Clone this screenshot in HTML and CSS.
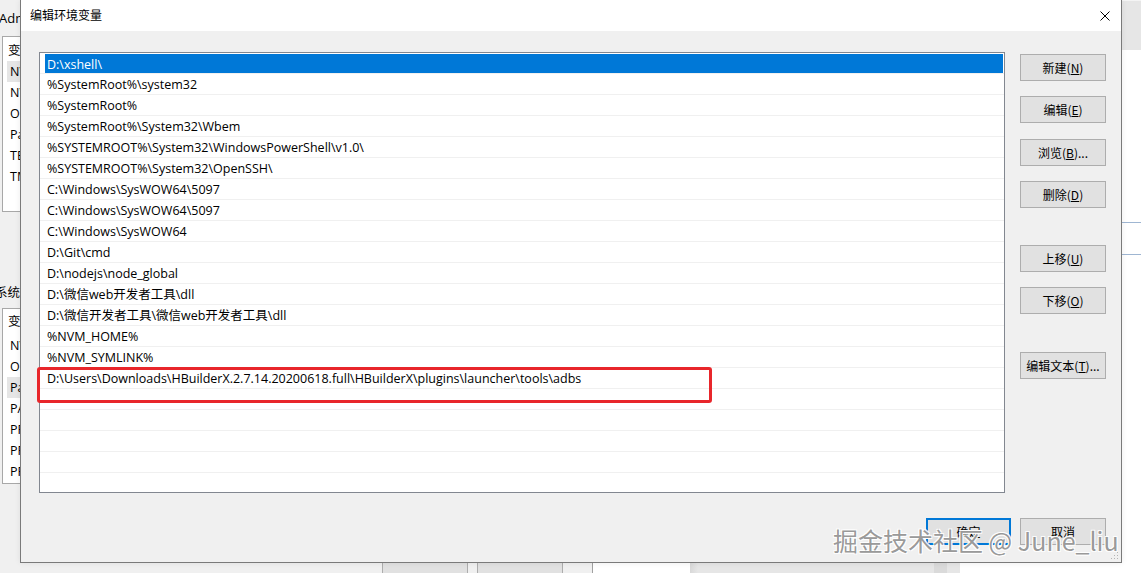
FILE: index.html
```html
<!DOCTYPE html>
<html lang="zh-CN">
<head>
<meta charset="utf-8">
<title>编辑环境变量</title>
<link rel="stylesheet" href="styles.css">
</head>
<body>
<div class="desktop">
  <div class="win-back">
    <div class="wb-title">Administrator 的用户变量(U)</div>
    <div class="wb-list wb-list1">
      <div class="wb-head">变量</div>
      <div class="wb-row sel">NVM_HOME</div>
      <div class="wb-row">NVM_SYMLINK</div>
      <div class="wb-row">OneDrive</div>
      <div class="wb-row">Path</div>
      <div class="wb-row">TEMP</div>
      <div class="wb-row">TMP</div>
    </div>
    <div class="wb-sep"></div>
    <div class="wb-label">系统变量(S)</div>
    <div class="wb-list wb-list2">
      <div class="wb-head">变量</div>
      <div class="wb-row">NVM_HOME</div>
      <div class="wb-row">OS</div>
      <div class="wb-row sel">Path</div>
      <div class="wb-row">PATHEXT</div>
      <div class="wb-row">PROCESSOR_ARCHITECTURE</div>
      <div class="wb-row">PROCESSOR_IDENTIFIER</div>
      <div class="wb-row">PROCESSOR_LEVEL</div>
    </div>
    <div class="wb-divider"></div>
    <div class="wb-buttons">
      <div class="wb-btn"></div>
      <div class="wb-btn"></div>
    </div>
  </div>

  <div class="win-right">
    <div class="wr-top"></div>
    <div class="wr-line wr-line1"></div>
    <div class="wr-line wr-line2"></div>
    <div class="wr-bottom">
      <div class="wr-white"></div>
      <div class="wr-gray"><div class="wr-band"></div></div>
    </div>
  </div>

  <div class="dialog">
    <div class="dlg-title">
      <span class="dlg-title-text">编辑环境变量</span>
      <svg class="dlg-close" width="10" height="10" viewBox="0 0 10 10"><path d="M0.5 0.5 L9.5 9.5 M9.5 0.5 L0.5 9.5" stroke="#000" stroke-width="1" fill="none"/></svg>
    </div>
    <div class="dlg-body">
      <div class="dlg-main">
        <div class="list-wrap">
          <div class="list">
            <div class="row"><span class="sel-item">D:\xshell\</span></div>
            <div class="row">%SystemRoot%\system32</div>
            <div class="row">%SystemRoot%</div>
            <div class="row">%SystemRoot%\System32\Wbem</div>
            <div class="row">%SYSTEMROOT%\System32\WindowsPowerShell\v1.0\</div>
            <div class="row">%SYSTEMROOT%\System32\OpenSSH\</div>
            <div class="row">C:\Windows\SysWOW64\5097</div>
            <div class="row">C:\Windows\SysWOW64\5097</div>
            <div class="row">C:\Windows\SysWOW64</div>
            <div class="row">D:\Git\cmd</div>
            <div class="row">D:\nodejs\node_global</div>
            <div class="row">D:\微信web开发者工具\dll</div>
            <div class="row">D:\微信开发者工具\微信web开发者工具\dll</div>
            <div class="row">%NVM_HOME%</div>
            <div class="row">%NVM_SYMLINK%</div>
            <div class="row">D:\Users\Downloads\HBuilderX.2.7.14.20200618.full\HBuilderX\plugins\launcher\tools\adbs</div>
            <div class="row"></div>
            <div class="row"></div>
            <div class="row"></div>
            <div class="row"></div>
            <div class="row"></div>
          </div>
          <div class="highlight-box"></div>
        </div>
        <div class="side">
          <div class="btn b-new">新建(<u>N</u>)</div>
          <div class="btn b-edit">编辑(<u>E</u>)</div>
          <div class="btn b-browse">浏览(<u>B</u>)...</div>
          <div class="btn b-del">删除(<u>D</u>)</div>
          <div class="btn b-up">上移(<u>U</u>)</div>
          <div class="btn b-down">下移(<u>O</u>)</div>
          <div class="btn b-text">编辑文本(<u>T</u>)...</div>
        </div>
      </div>
      <div class="dlg-footer">
        <div class="btn btn-default">确定</div>
        <div class="btn">取消</div>
      </div>
    </div>
    <svg class="grip" width="8" height="8" viewBox="0 0 8 8">
      <rect x="6" y="0" width="1" height="1" fill="#b4b4b4"/>
      <rect x="3" y="3" width="1" height="1" fill="#b4b4b4"/>
      <rect x="6" y="3" width="1" height="1" fill="#b4b4b4"/>
      <rect x="0" y="6" width="1" height="1" fill="#b4b4b4"/>
      <rect x="3" y="6" width="1" height="1" fill="#b4b4b4"/>
      <rect x="6" y="6" width="1" height="1" fill="#b4b4b4"/>
    </svg>
  </div>

  <div class="watermark">掘金技术社区 @ June_liu</div>
</div>
</body>
</html>
```

FILE: styles.css
```css
* { box-sizing: border-box; }
html, body { margin: 0; padding: 0; }
body {
  width: 1141px;
  height: 573px;
  overflow: hidden;
  font-family: "Open Sans", "Noto Sans CJK SC", sans-serif;
  font-size: 12.5px;
  color: #000;
  background: #fff;
}
.desktop {
  position: relative;
  width: 1141px;
  height: 573px;
  overflow: hidden;
}

/* ---------- background window (left) ---------- */
.win-back {
  position: absolute;
  left: 0;
  top: 0;
  width: 593px;
  height: 573px;
  background: #f0f0f0;
  border-right: 1px solid #a0a0a0;
  display: flex;
  flex-direction: column;
}
.wb-title {
  margin-top: 10px;
  margin-left: -1px;
  height: 16px;
  line-height: 16px;
  font-size: 13px;
  white-space: nowrap;
}
.wb-list {
  margin-top: 10px;
  margin-left: 2px;
  width: 560px;
  height: 176px;
  background: #fff;
  border: 1px solid #a8a8a8;
  flex: none;
}
.wb-list1 { padding-top: 3px; }
.wb-list2 { padding-top: 2px; margin-top: 7px; }
.wb-head {
  height: 21px;
  line-height: 21px;
  padding-left: 5px;
}
.wb-list2 .wb-head { height: 24px; line-height: 21px; }
.wb-row {
  height: 21px;
  line-height: 21px;
  margin-left: 4px;
  padding-left: 3px;
}
.wb-row.sel { background: #e5e5e5; }
.wb-sep {
  margin-top: 60px;
  height: 1px;
  background: #dcdcdc;
}
.wb-label {
  margin-top: 13px;
  margin-left: -5px;
  height: 16px;
  line-height: 16px;
}
.wb-divider {
  margin-top: 60px;
  height: 1px;
  background: #dadada;
}
.wb-buttons {
  margin-top: 18px;
  margin-left: 382px;
  display: flex;
  gap: 9px;
}
.wb-btn {
  width: 86px;
  height: 24px;
  background: #e1e1e1;
  border: 1px solid #adadad;
}

/* ---------- background window (right) ---------- */
.win-right {
  position: absolute;
  left: 593px;
  top: 0;
  width: 548px;
  height: 573px;
  background: #fff;
  display: flex;
  flex-direction: column;
}
.wr-top {
  height: 50px;
  background: #e6e6e6;
  border-top: 1px solid #f4f4f4;
}
.wr-line {
  height: 1px;
  background: #9fb6d2;
}
.wr-line1 { margin-top: 172px; }
.wr-line2 { margin-top: 31px; }
.wr-bottom {
  margin-top: auto;
  height: 40px;
  display: flex;
}
.wr-white { width: 97px; }
.wr-gray {
  width: 270px;
  background: linear-gradient(to right, #d8d8d8, #e6e6e6 8px, #e6e6e6);
  display: flex;
  justify-content: flex-end;
}
.wr-band {
  width: 13px;
  margin-right: 13px;
  background: #dadada;
}

/* ---------- dialog ---------- */
.dialog {
  position: absolute;
  left: 20px;
  top: 0;
  width: 1102px;
  height: 563px;
  border: 1px solid #7a7a7a;
  border-top: none;
  background: #f0f0f0;
  display: flex;
  flex-direction: column;
  box-shadow: 0 0 6px rgba(0,0,0,0.08);
}
.dlg-title {
  height: 31px;
  background: #fff;
  display: flex;
  align-items: center;
  justify-content: space-between;
  padding: 0 11px 1px 9px;
  flex: none;
}
.dlg-title-text {
  font-family: "Noto Sans CJK SC", sans-serif;
  font-size: 12px;
  line-height: 16px;
}
.dlg-close { display: block; margin-top: 1px; }
.dlg-body {
  flex: 1;
  padding: 21px 15px 0 18px;
  display: flex;
  flex-direction: column;
}
.dlg-main {
  display: flex;
  gap: 15px;
}
.list-wrap {
  position: relative;
  width: 966px;
  height: 441px;
}
.list {
  width: 966px;
  height: 441px;
  background: #fff;
  border: 1px solid #828790;
  overflow: hidden;
}
.row {
  height: 21px;
  line-height: 18px;
  padding-top: 2px;
  border-bottom: 1px solid #f0f0f0;
  padding-left: 7px;
  white-space: nowrap;
}
.row:first-child { padding-left: 5px; padding-top: 1px; padding-right: 1px; }
.sel-item {
  display: block;
  height: 19px;
  line-height: 17px;
  padding-top: 2px;
  background: #0078d7;
  color: #fff;
  padding-left: 2px;
}
.highlight-box {
  position: absolute;
  left: -2px;
  top: 315px;
  width: 675px;
  height: 36px;
  border: 3px solid #e8262b;
  border-radius: 3px;
}
.side {
  width: 86px;
  display: flex;
  flex-direction: column;
  padding-top: 2px;
}
.btn {
  width: 86px;
  height: 27px;
  background: #e1e1e1;
  border: 1px solid #adadad;
  display: flex;
  align-items: center;
  justify-content: center;
  font-family: "Noto Sans CJK SC", sans-serif;
  font-size: 12px;
  white-space: nowrap;
}
.btn u { text-underline-offset: 1px; }
.b-edit, .b-del, .b-down { margin-top: 15px; }
.b-browse { margin-top: 16px; }
.b-up { margin-top: 37px; }
.b-text { margin-top: 38px; }
.dlg-footer {
  margin-top: 25px;
  display: flex;
  justify-content: flex-end;
  gap: 9px;
}
.dlg-footer .btn-default {
  width: 85px;
  border: 2px solid #0078d7;
}
.grip {
  position: absolute;
  right: 2px;
  bottom: 2px;
}

/* ---------- watermark ---------- */
.watermark {
  position: absolute;
  left: 833px;
  top: 523px;
  font-family: "Noto Sans CJK SC", sans-serif;
  font-size: 25px;
  line-height: 34px;
  color: rgba(140,140,140,0.9);
  white-space: nowrap;
  text-shadow: 1px 1px 0 rgba(255,255,255,0.9), -1px -1px 0 rgba(255,255,255,0.9), 1px -1px 0 rgba(255,255,255,0.9), -1px 1px 0 rgba(255,255,255,0.9);
}
```
